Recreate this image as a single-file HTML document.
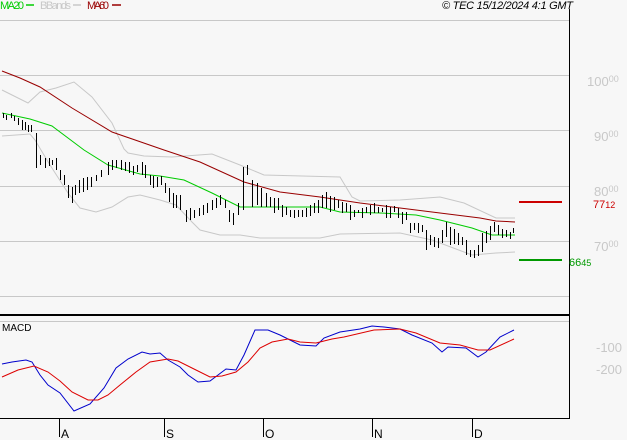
<!DOCTYPE html>
<html><head><style>
html,body{margin:0;padding:0;background:#f7f7f7;}
svg{display:block;font-family:"Liberation Sans",sans-serif;}
</style></head><body>
<svg width="627" height="440" viewBox="0 0 627 440" xmlns="http://www.w3.org/2000/svg">
<rect width="627" height="440" fill="#f7f7f7"/>
<g stroke="#c8c8c8" stroke-width="1">
<line x1="0" y1="20.5" x2="569" y2="20.5"/>
<line x1="0" y1="75.5" x2="569" y2="75.5"/>
<line x1="0" y1="130.5" x2="569" y2="130.5"/>
<line x1="0" y1="186.5" x2="569" y2="186.5"/>
<line x1="0" y1="241.5" x2="569" y2="241.5"/>
<line x1="0" y1="296.5" x2="569" y2="296.5"/>
<line x1="0" y1="321.5" x2="569" y2="321.5"/>
</g>
<line x1="0" y1="315" x2="569" y2="315" stroke="#000" stroke-width="2"/>
<line x1="569.5" y1="9" x2="569.5" y2="419" stroke="#000"/>
<line x1="0" y1="418.5" x2="569" y2="418.5" stroke="#000"/>
<g stroke="#000"><line x1="59.5" y1="419" x2="59.5" y2="437"/><line x1="164.5" y1="419" x2="164.5" y2="437"/><line x1="263.5" y1="419" x2="263.5" y2="437"/><line x1="372.5" y1="419" x2="372.5" y2="437"/><line x1="472.5" y1="419" x2="472.5" y2="437"/></g>
<g font-size="12" fill="#000"><text x="61" y="438">A</text><text x="166" y="438">S</text><text x="265" y="438">O</text><text x="374" y="438">N</text><text x="474" y="438">D</text></g>
<text x="0" y="9" font-size="11" fill="#00cc00" textLength="24">MA20</text><line x1="26" y1="5" x2="34" y2="5" stroke="#00cc00" stroke-width="1.5"/>
<text x="40" y="9" font-size="11" fill="#c8c8c8" textLength="31">BBands</text><line x1="73" y1="5" x2="81" y2="5" stroke="#c8c8c8" stroke-width="1.5"/>
<text x="87" y="9" font-size="11" fill="#990000" textLength="22">MA60</text><line x1="112" y1="5" x2="121" y2="5" stroke="#990000" stroke-width="1.5"/>
<text x="442" y="9" font-size="11" font-style="italic" fill="#000" textLength="131">© TEC 15/12/2024 4:1 GMT</text>
<g font-size="13" fill="#c8c8c8">
<text x="587" y="86">100<tspan font-size="9" dy="-4">00</tspan></text>
<text x="594" y="141">90<tspan font-size="9" dy="-4">00</tspan></text>
<text x="594" y="196">80<tspan font-size="9" dy="-4">00</tspan></text>
<text x="594" y="251">70<tspan font-size="9" dy="-4">00</tspan></text>
<text x="596" y="352">-100</text>
<text x="596" y="374">-200</text>
</g>
<line x1="519" y1="202" x2="562" y2="202" stroke="#cc0000" stroke-width="2"/>
<text x="593" y="208" font-size="11" fill="#cc0000">77<tspan font-size="9">12</tspan></text>
<line x1="519" y1="260" x2="562" y2="260" stroke="#009900" stroke-width="2"/>
<text x="569" y="266" font-size="11" fill="#009900">66<tspan font-size="9">45</tspan></text>
<polyline fill="none" stroke="#c8c8c8" points="2,90 28,103 40,92 56,88 74,82 92,97 112,123 124,149 128,153 144,156 172,157 212,154 240,165 264,175 340,177 352,197 360,201 400,200 440,197 464,203 496,218 515,218"/>
<polyline fill="none" stroke="#c8c8c8" points="2,136 30,134 35,140 50,165 68,193 80,208 96,212 112,207 128,197 140,195 160,200 176,205 192,222 200,230 220,235 240,235 260,238 320,238 340,234 400,233 432,240 472,255 496,253 515,252"/>
<polyline fill="none" stroke="#990000" points="2,71 20,78 40,87 72,108 112,132 164,150 200,162 244,182 280,192 320,197 360,203 400,208 440,213 480,218 496,221 515,222"/>
<polyline fill="none" stroke="#00cc00" points="2,113 30,119 52,126 84,150 108,165 140,174 160,176 184,180 212,193 240,207 280,207 320,207 340,212 380,213 416,215 440,220 472,228 492,235 515,235"/>
<path fill="none" stroke="#000" d="M3.5 113V118M6.5 115V120M11.5 113V118M14.5 116V121M18.5 118V125M22.5 120V130M25.5 122V130M28.5 125V132M31.5 125V132M36.5 133V168M40.5 155V165M45.5 158V168M49.5 158V166M52.5 160V165M56.5 158V170M60.5 170V180M64.5 175V185M68.5 185V198M72.5 187V203M75.5 185V195M79.5 180V193M83.5 178V192M87.5 177V190M91.5 177V187M96.5 175V181M101.5 170V177M108.5 162V175M112.5 160V170M116.5 160V168M121.5 160V170M125.5 162V171M129.5 162V173M133.5 166V175M137.5 165V172M142.5 162V175M145.5 165V178M150.5 175V185M153.5 176V188M157.5 177V187M161.5 176V185M165.5 183V193M169.5 188V202M173.5 193V208M176.5 195V208M180.5 195V210M186.5 210V222M190.5 208V220M194.5 210V218M199.5 208V216M203.5 205V215M207.5 203V213M212.5 200V210M216.5 198V208M220.5 195V205M225.5 200V208M229.5 210V222M233.5 213V225M238.5 203V215M243.5 167V210M247.5 165V175M252.5 180V207M257.5 183V205M261.5 188V207M266.5 193V207M270.5 197V207M274.5 198V213M278.5 198V210M282.5 205V217M286.5 207V215M290.5 210V217M294.5 210V218M298.5 210V217M302.5 210V217M306.5 208V217M310.5 205V216M314.5 203V213M318.5 200V213M322.5 195V208M326.5 192V208M330.5 196V212M334.5 197V210M338.5 200V208M342.5 202V213M346.5 203V212M350.5 205V220M354.5 210V217M358.5 210V213M362.5 208V218M366.5 207V213M370.5 205V215M374.5 203V213M378.5 207V213M382.5 208V212M386.5 205V218M390.5 207V218M394.5 206V212M398.5 208V218M402.5 212V224M406.5 212V220M410.5 223V233M414.5 223V230M418.5 223V233M422.5 225V232M426.5 230V250M430.5 235V245M434.5 237V247M438.5 238V248M442.5 230V243M446.5 222V237M450.5 227V245M454.5 229V244M458.5 233V245M462.5 237V245M466.5 240V255M470.5 250V257M474.5 250V258M478.5 245V256M482.5 233V252M486.5 231V243M490.5 226V240M494.5 222V232M498.5 225V235M502.5 229V238M506.5 230V237M510.5 232V239M513.5 228V233"/>
<text x="2" y="331" font-size="10" fill="#000">MACD</text>
<polyline fill="none" stroke="#0000cc" points="2,364 12,362 26,360 32,362 40,375 48,385 60,393 74,411 90,404 104,388 116,368 128,359 142,352 150,354 160,353 168,360 180,367 188,375 198,382 210,381 226,369 236,370 244,355 255,330 268,330 280,335 300,345 316,346 324,338 340,332 360,329 372,326 384,327 400,329 412,335 432,343 442,352 448,347 466,348 478,357 486,352 500,337 514,330"/>
<polyline fill="none" stroke="#dd0000" points="2,377 18,370 34,366 48,372 60,381 72,392 88,400 98,400 108,395 120,385 136,372 150,362 168,359 178,361 196,370 210,377 222,376 236,372 248,362 260,348 272,342 288,339 300,342 316,343 332,339 344,337 374,330 400,329 416,333 440,343 460,345 478,350 490,350 514,339"/>
</svg>
</body></html>
